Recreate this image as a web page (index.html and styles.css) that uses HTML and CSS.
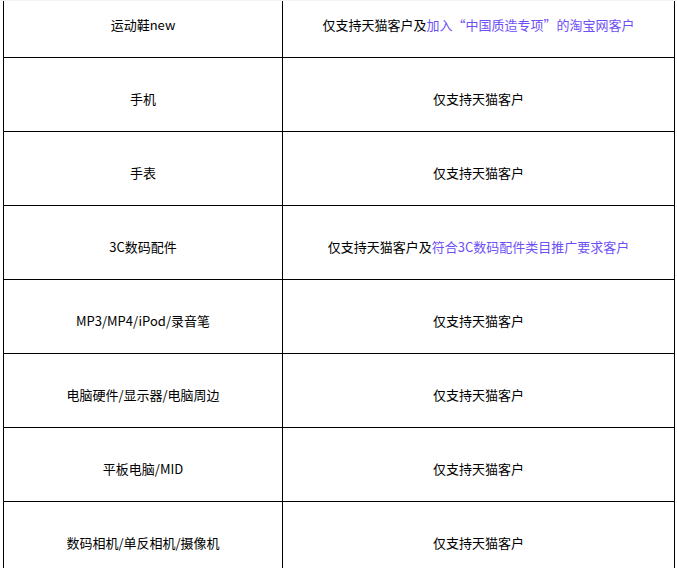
FILE: index.html
```html
<!DOCTYPE html>
<html lang="zh-CN">
<head>
<meta charset="utf-8">
<title>类目</title>
<link rel="stylesheet" href="styles.css">
</head>
<body>
<table class="rules">
  <colgroup><col class="c1"><col class="c2"></colgroup>
  <tbody>
    <tr><td>运动鞋new</td><td>仅支持天猫客户及<span class="hl">加入“中国质造专项”的淘宝网客户</span></td></tr>
    <tr><td>手机</td><td>仅支持天猫客户</td></tr>
    <tr><td>手表</td><td>仅支持天猫客户</td></tr>
    <tr><td>3C数码配件</td><td>仅支持天猫客户及<span class="hl">符合3C数码配件类目推广要求客户</span></td></tr>
    <tr><td>MP3/MP4/iPod/录音笔</td><td>仅支持天猫客户</td></tr>
    <tr><td>电脑硬件/显示器/电脑周边</td><td>仅支持天猫客户</td></tr>
    <tr><td>平板电脑/MID</td><td>仅支持天猫客户</td></tr>
    <tr><td>数码相机/单反相机/摄像机</td><td>仅支持天猫客户</td></tr>
  </tbody>
</table>
</body>
</html>
```
FILE: styles.css
```css
html, body {
  margin: 0;
  padding: 0;
  background: #fff;
}
body {
  font-family: "Noto Sans CJK SC", "Noto Sans", sans-serif;
  font-size: 13px;
  color: #000;
  overflow: hidden;
  border-top: 1px solid #f3f3f3;
}
.rules {
  border-collapse: collapse;
  table-layout: fixed;
  width: 671px;
  margin: -18px 0 0 3px;
}
.c1 { width: 279px; }
.c2 { width: 392px; }
.rules td {
  border: 1px solid #000;
  height: 74px;
  box-sizing: border-box;
  padding: 8px 0 0 0;
  text-align: center;
  vertical-align: middle;
  line-height: 18px;
}
.hl {
  color: #6d4ff5;
}
```
